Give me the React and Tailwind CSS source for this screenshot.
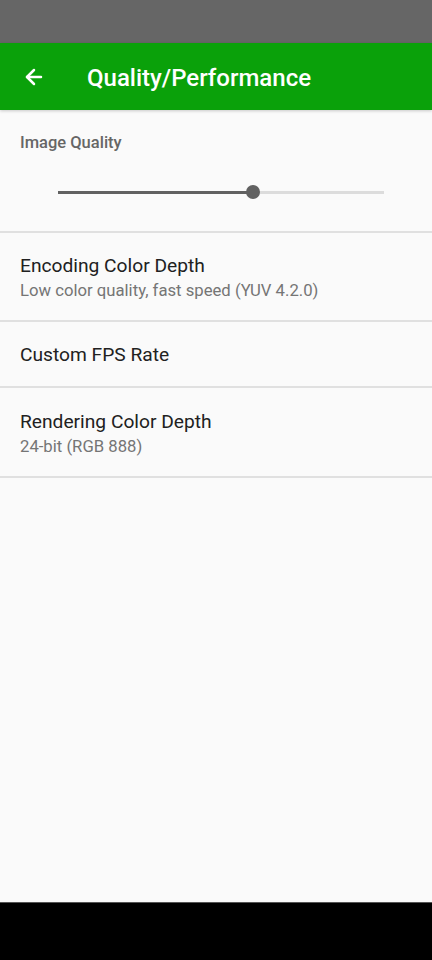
import { ArrowLeft } from 'lucide-react';

function Row({ title, subtitle, h }) {
  return (
    <div className={`flex flex-col justify-center px-5 pt-[2px] border-b-2 border-[#e0e0e0] ${h}`}>
      <div className="text-[19.2px] leading-6 text-[#212121]">{title}</div>
      {subtitle && <div className="text-[16.7px] leading-5 text-[#757575] mt-[3px]">{subtitle}</div>}
    </div>
  );
}

export default function App() {
  return (
    <div className="w-[432px] h-[960px] flex flex-col bg-[#fafafa] font-['Roboto',sans-serif] overflow-hidden">
      <div className="h-[43px] bg-[#666666] shrink-0" />
      <div className="h-[67px] bg-[#0aa10a] flex items-center shrink-0 shadow-[0_1px_3px_rgba(0,0,0,0.2)] relative z-10">
        <ArrowLeft className="ml-[22px] text-white" size={24} strokeWidth={2.5} />
        <div className="ml-[41px] mt-[2px] text-[24px] font-medium text-white">Quality/Performance</div>
      </div>
      <div className="flex-1 flex flex-col">
        <div className="h-[123px] border-b-2 border-[#e0e0e0] flex flex-col">
          <div className="px-5 pt-[23px] text-[16.5px] font-medium text-[#666666] leading-5">Image Quality</div>
          <div className="mt-[31px] ml-[58px] w-[326px] relative h-[16px] flex items-center">
            <div className="h-[3px] w-[195px] bg-[#616161]" />
            <div className="h-[3px] flex-1 bg-[#dcdcdc]" />
            <div className="absolute left-[188px] w-[14px] h-[14px] rounded-full bg-[#616161]" />
          </div>
        </div>
        <Row title="Encoding Color Depth" subtitle="Low color quality, fast speed (YUV 4.2.0)" h="h-[89px]" />
        <Row title="Custom FPS Rate" h="h-[66px]" />
        <Row title="Rendering Color Depth" subtitle="24-bit (RGB 888)" h="h-[90px]" />
      </div>
      <div className="h-[58px] bg-black shrink-0 border-t border-[#555]" />
    </div>
  );
}
